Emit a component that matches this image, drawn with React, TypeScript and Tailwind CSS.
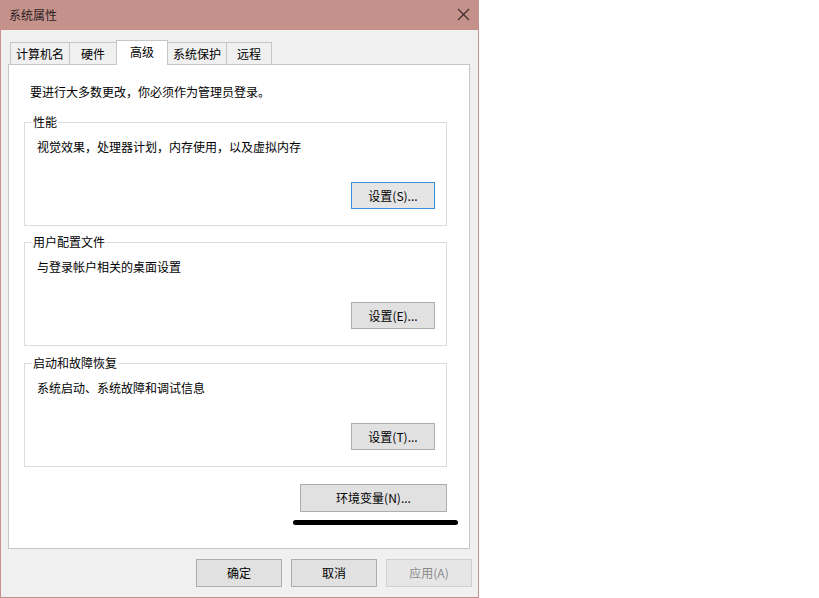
import React from 'react';

const font = { fontFamily: '"Noto Sans CJK SC", "Noto Sans", sans-serif' };

interface Tab {
  label: string;
  width: string;
  active?: boolean;
}

const tabs: Tab[] = [
  { label: '计算机名', width: 'w-[60px]' },
  { label: '硬件', width: 'w-[48px]' },
  { label: '高级', width: 'w-[52px]', active: true },
  { label: '系统保护', width: 'w-[60px]' },
  { label: '远程', width: 'w-[46px]' },
];

interface Group {
  title: string;
  desc: string;
  button: string;
  focused?: boolean;
  gap: string;
}

const groups: Group[] = [
  { title: '性能', desc: '视觉效果，处理器计划，内存使用，以及虚拟内存', button: '设置(S)...', focused: true, gap: 'mt-[22px]' },
  { title: '用户配置文件', desc: '与登录帐户相关的桌面设置', button: '设置(E)...', gap: 'mt-[16px]' },
  { title: '启动和故障恢复', desc: '系统启动、系统故障和调试信息', button: '设置(T)...', gap: 'mt-[17px]' },
];

const Button: React.FC<{ label: string; focused?: boolean; disabled?: boolean; className?: string }> = ({
  label,
  focused,
  disabled,
  className,
}) => (
  <button
    className={`flex items-center justify-center border text-[12px] leading-none ${
      disabled
        ? 'border-[#cfcfcf] bg-[#e6e6e6] text-[#8a8a8a]'
        : focused
          ? 'border-[#3c8fd9] bg-[#e5e5e5] text-black'
          : 'border-[#adadad] bg-[#e1e1e1] text-black'
    } ${className ?? ''}`}
  >
    {label}
  </button>
);

const GroupBox: React.FC<{ group: Group }> = ({ group }) => (
  <div className={`${group.gap} flex h-[104px] flex-col border border-[#dcdcdc]`}>
    <span className="-mt-[9px] ml-[7px] self-start bg-white px-[1px] leading-[16px]">{group.title}</span>
    <p className="ml-[12px] mt-[9px] leading-[16px]">{group.desc}</p>
    <Button label={group.button} focused={group.focused} className="mb-[16px] mr-[11px] mt-auto h-[27px] w-[84px] self-end" />
  </div>
);

export default function App() {
  return (
    <div className="h-[598px] w-full bg-white text-[12px] text-black" style={font}>
      <div className="flex h-[598px] w-[479px] flex-col border-x border-b border-[#c4918b] bg-[#f0f0f0]">
        {/* title bar */}
        <div className="flex h-[30px] shrink-0 items-center justify-between bg-[#c4918b] pl-[8px] pr-[8px]">
          <span className="text-[12px] text-[#2b2222]">系统属性</span>
          <svg width="13" height="13" viewBox="0 0 13 13" className="mb-[2px]">
            <path d="M1 1L12 12M12 1L1 12" stroke="#3b2d2b" strokeWidth="1.1" />
          </svg>
        </div>

        <div className="flex flex-1 flex-col pl-[7px] pr-[8px] pt-[10px]">
          {/* tabs */}
          <div className="flex h-[24px] items-end pl-[2px]">
            {tabs.map((t, i) => (
              <div
                key={t.label}
                className={`${t.width} ${i > 0 ? '-ml-px' : ''} flex items-center justify-center border-x border-t border-[#c6c6c6] ${
                  t.active ? 'relative z-10 -mb-px h-[25px] bg-white pb-[2px]' : 'h-[22px] bg-[#f0f0f0]'
                }`}
              >
                {t.label}
              </div>
            ))}
          </div>

          {/* panel */}
          <div className="flex h-[485px] flex-col border border-[#c6c6c6] bg-white pl-[15px] pr-[22px] pt-[19px]">
            <p className="ml-[6px] leading-[16px]">要进行大多数更改，你必须作为管理员登录。</p>
            {groups.map((g) => (
              <GroupBox key={g.title} group={g} />
            ))}
            <Button label="环境变量(N)..." className="mt-[17px] h-[28px] w-[147px] self-end" />
            <div className="-mr-[11px] mt-[8px] h-[5px] w-[165px] self-end rounded-full bg-black" />
          </div>

          {/* dialog buttons */}
          <div className="-mr-[2px] mt-[10px] flex justify-end gap-[9px]">
            <Button label="确定" className="h-[28px] w-[86px]" />
            <Button label="取消" className="h-[28px] w-[86px]" />
            <Button label="应用(A)" disabled className="h-[28px] w-[86px]" />
          </div>
        </div>
      </div>
    </div>
  );
}
